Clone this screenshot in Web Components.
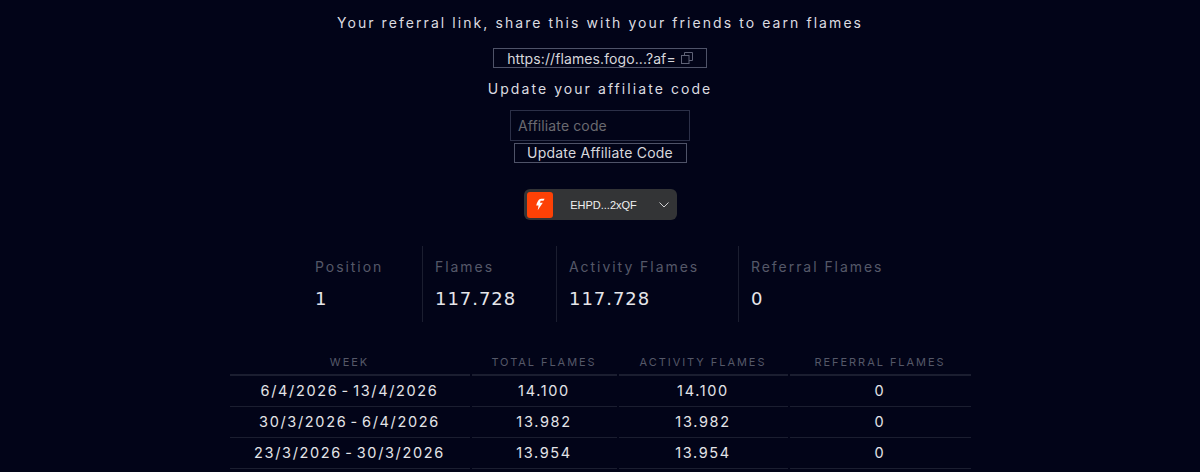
<!DOCTYPE html>
<html>
<head>
<meta charset="utf-8">
<style>
html, body { margin: 0; height: 472px; overflow: hidden; background: #020418; color: #fff; font-family: Inter, "Liberation Sans", sans-serif; }
</style>
</head>
<body>
<flames-referral></flames-referral>
<wallet-select></wallet-select>
<flames-stats></flames-stats>
<flames-weeks></flames-weeks>
<script>
class FlamesReferral extends HTMLElement {
    constructor() {
        super()
        this.attachShadow({ mode: 'open' }).innerHTML = `
        <style>
        :host{ display: flex; flex-direction: column; align-items: center; padding-top: 14px; }
        p{ margin: 0; font-size: 14px; line-height: 18px; letter-spacing: 2.07px; color: #dcdce0; font-weight: 400; }
        .link{ box-sizing: border-box; width: 214px; height: 20px; margin-top: 16px; border: 1px solid #4f5368; display: flex; align-items: center; justify-content: center; gap: 5px; font-size: 14px; color: #d8d8dc; letter-spacing: 0.1px; }
        .link svg{ flex: none; }
        .sub{ margin-top: 12px; }
        .input{ box-sizing: border-box; width: 180px; height: 31px; margin-top: 12px; border: 1px solid #2c3048; padding-left: 7px; font-size: 14px; line-height: 29px; color: #6a6a70; letter-spacing: 0.12px; }
        .btn{ box-sizing: border-box; width: 173px; height: 20px; margin-top: 2px; border: 1px solid #4f5368; font-size: 14px; line-height: 18px; text-align: center; color: #d8d8dc; letter-spacing: 0.22px; }
        </style>
        <p>Your referral link, share this with your friends to earn flames</p>
        <div class="link">https://flames.fogo...?af=
            <svg width="12" height="12" viewBox="0 0 12 12" fill="none" stroke="#5f6276" stroke-width="1"><rect x="0.5" y="3.5" width="7.5" height="8"/><path d="M3.5 3.5V0.5H11.5V8.5H8"/></svg>
        </div>
        <p class="sub">Update your affiliate code</p>
        <div class="input">Affiliate code</div>
        <div class="btn">Update Affiliate Code</div>`
    }
}

class WalletSelect extends HTMLElement {
    constructor() {
        super()
        this.attachShadow({ mode: 'open' }).innerHTML = `
        <style>
        :host{ display: flex; justify-content: center; margin-top: 26px; }
        .box{ box-sizing: border-box; width: 153px; height: 31px; background: #333436; border-radius: 6px; padding: 0 8px 0 3px; display: flex; align-items: center; }
        .logo{ width: 26px; height: 26px; background: #fd4106; border-radius: 3px; display: flex; align-items: center; justify-content: center; }
        .addr{ flex: 1; text-align: center; font-size: 11px; color: #f0f0f0; font-family: "Liberation Sans", sans-serif; font-weight: 400; padding-right: 4px; }
        </style>
        <div class="box">
            <div class="logo"><svg width="10" height="13" viewBox="0 0 11 14" fill="#fff"><path d="M4.5 1.5C5.2 0.8 6 0.6 7 0.6H10.6L9.3 3H6.2L5.5 5H8.6L3 13.4L3.9 8.2H1.4C1.9 5.6 3 3 4.5 1.5Z"/></svg></div>
            <span class="addr">EHPD...2xQF</span>
            <svg width="10" height="6" viewBox="0 0 10 6" fill="none" stroke="#d0d0d2" stroke-width="1"><path d="M0.5 0.5L5 5L9.5 0.5"/></svg>
        </div>`
    }
}

class StatItem extends HTMLElement {
    constructor() {
        super()
        this.attachShadow({ mode: 'open' }).innerHTML = `
        <style>
        :host{ display: flex; flex-direction: column; height: 76px; padding-left: 12px; border-left: 1px solid #1b1e30; }
        :host(:first-child){ border-left: 0; padding-left: 0; }
        .label{ font-size: 14px; line-height: 18px; letter-spacing: 1.95px; color: #555868; margin-top: 12px; white-space: nowrap; }
        .value{ font-size: 18px; line-height: 22px; letter-spacing: 0.95px; color: #e6e6ea; margin-top: 12px; font-family: "DejaVu Sans", sans-serif; }
        </style>
        <span class="label"><slot name="label"></slot></span>
        <span class="value"><slot name="value"></slot></span>`
    }
}

class FlamesStats extends HTMLElement {
    constructor() {
        super()
        this.attachShadow({ mode: 'open' }).innerHTML = `
        <style>
        :host{ display: grid; grid-template-columns: 107px 134px 182px auto; margin-top: 26px; padding-left: 315px; }
        </style>
        <slot></slot>`
        const stats = [['Position', '1'], ['Flames', '117.728'], ['Activity Flames', '117.728'], ['Referral Flames', '0']]
        stats.forEach(([label, value]) => {
            const item = document.createElement('stat-item')
            item.innerHTML = `<span slot="label">${label}</span><span slot="value">${value}</span>`
            this.append(item)
        })
    }
}

class FlamesWeeks extends HTMLElement {
    constructor() {
        super()
        const rows = [
            ['6/4/2026 - 13/4/2026', '14.100', '14.100', '0'],
            ['30/3/2026 - 6/4/2026', '13.982', '13.982', '0'],
            ['23/3/2026 - 30/3/2026', '13.954', '13.954', '0']
        ]
        const head = ['Week', 'Total Flames', 'Activity Flames', 'Referral Flames']
        this.attachShadow({ mode: 'open' }).innerHTML = `
        <style>
        :host{ display: block; margin-top: 24px; }
        .grid{ display: grid; width: 741px; margin: 0 auto; grid-template-columns: 240px 145px 169px 181px; column-gap: 2px; }
        .th, .td{ text-align: center; border-bottom: 1px solid #1b1e30; box-sizing: border-box; }
        .th{ height: 30px; padding-top: 3px; line-height: 26px; font-size: 11px; letter-spacing: 1.95px; color: #555868; text-transform: uppercase; border-bottom-width: 2px; }
        .td{ height: 31px; line-height: 29px; font-size: 14.5px; letter-spacing: 1.65px; word-spacing: -2.5px; color: #e4e4e8; }
        </style>
        <div class="grid">
            ${head.map(h => `<div class="th">${h}</div>`).join('')}
            ${rows.map(r => r.map(c => `<div class="td">${c}</div>`).join('')).join('')}
        </div>`
    }
}

customElements.define('flames-referral', FlamesReferral)
customElements.define('wallet-select', WalletSelect)
customElements.define('stat-item', StatItem)
customElements.define('flames-stats', FlamesStats)
customElements.define('flames-weeks', FlamesWeeks)
</script>
</body>
</html>
